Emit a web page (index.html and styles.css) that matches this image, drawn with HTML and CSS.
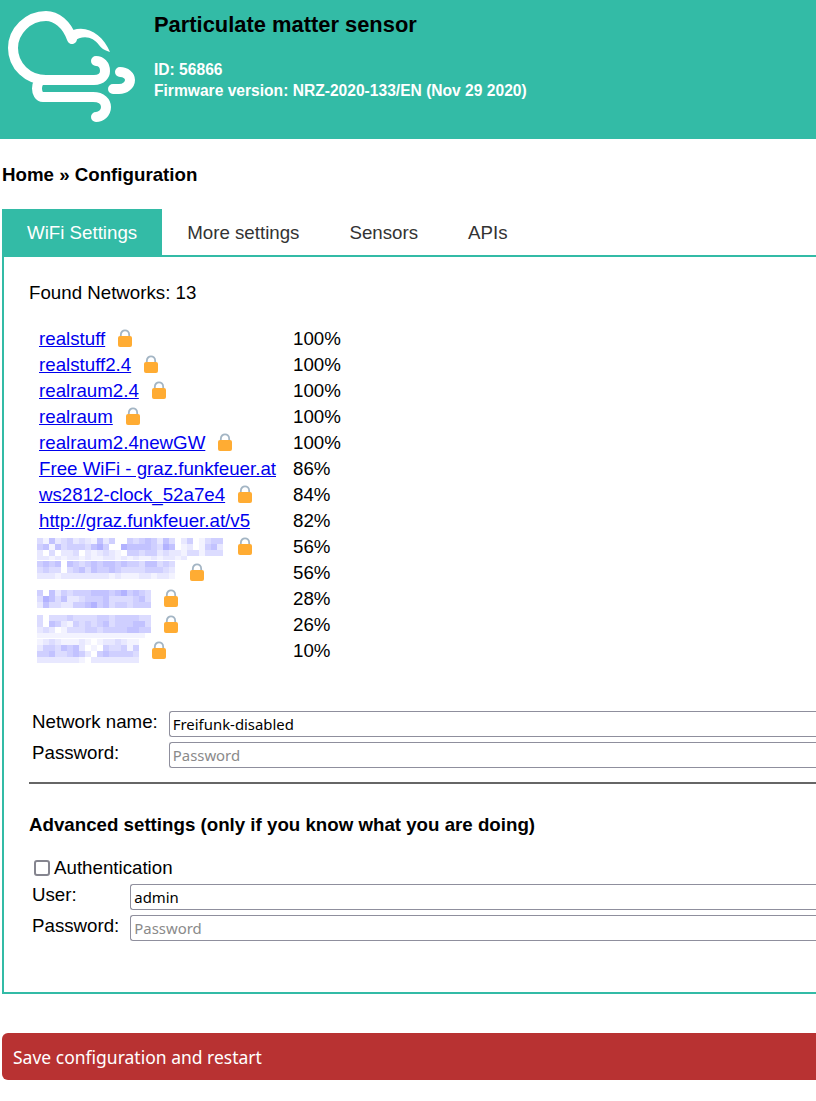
FILE: index.html
```html
<!DOCTYPE html>
<html>

<head>
    <title>Particulate matter sensor</title>
    <link rel="stylesheet" href="styles.css">
</head>

<body>
    <header class="topbar">
        <svg class="logo" width="140" height="130" viewBox="0 0 140 130" fill="none" stroke="#fff" stroke-width="10" stroke-linecap="round" stroke-linejoin="round">
            <path d="M72 39 C67 24 56 16 46 16 C28 16 13 31 13 48 C13 66 28 80 46 80 H94 C102 80 105 75 105 71 C105 65 101 61 96 61"/>
            <path d="M60 80 H43 C35 80 35 97 43 97 H93 C102 97 106 102 106 107 C106 113 101 117 96 117"/>
            <path d="M120 72 C126 72 130 76 130 80 C130 85 125 89 119 89 H113"/>
            <path d="M73 30 C88 25 103 35 110 52 C104 50 101 48 99 45 C93 37 83 34 73 42 Z" fill="#fff" stroke="none"/>
        </svg>
        <div class="topbar-text">
            <h1>Particulate matter sensor</h1>
            <div class="device-info">ID: 56866<br>Firmware version: NRZ-2020-133/EN (Nov 29 2020)</div>
        </div>
    </header>

    <main>
        <div class="crumbs">Home » Configuration</div>

        <div class="tabs">
            <a class="tab active">WiFi Settings</a>
            <a class="tab">More settings</a>
            <a class="tab">Sensors</a>
            <a class="tab">APIs</a>
        </div>

        <div class="panel">
            <div class="found">Found Networks: 13</div>

            <table class="networks">
                <tr><td><a href="#">realstuff</a><svg class="lock"><use href="#lockIcon"/></svg></td><td>100%</td></tr>
                <tr><td><a href="#">realstuff2.4</a><svg class="lock"><use href="#lockIcon"/></svg></td><td>100%</td></tr>
                <tr><td><a href="#">realraum2.4</a><svg class="lock"><use href="#lockIcon"/></svg></td><td>100%</td></tr>
                <tr><td><a href="#">realraum</a><svg class="lock"><use href="#lockIcon"/></svg></td><td>100%</td></tr>
                <tr><td><a href="#">realraum2.4newGW</a><svg class="lock"><use href="#lockIcon"/></svg></td><td>100%</td></tr>
                <tr><td><a href="#">Free WiFi - graz.funkfeuer.at</a></td><td>86%</td></tr>
                <tr><td><a href="#">ws2812-clock_52a7e4</a><svg class="lock"><use href="#lockIcon"/></svg></td><td>84%</td></tr>
                <tr><td><a href="#">http://graz.funkfeuer.at/v5</a></td><td>82%</td></tr>
                <tr><td><svg class="mosaic" data-top="4" data-rows="3152342321524004345425302401344|4515344435640065555436501201452|2030223021232104434423221331333|2212122121122121211212212000000"></svg><svg class="lock far"><use href="#lockIcon"/></svg></td><td>56%</td></tr>
                <tr><td><svg class="mosaic" data-top="1" data-rows="45450543454554544355343|34330345354454333344432|22212222222212111221221"></svg><svg class="lock far"><use href="#lockIcon"/></svg></td><td>56%</td></tr>
                <tr><td><svg class="mosaic" data-top="4" data-rows="4052434445554564543|3653522344453333453|2533224456453443444"></svg><svg class="lock"><use href="#lockIcon"/></svg></td><td>28%</td></tr>
                <tr><td><svg class="mosaic" data-top="3" data-rows="3033343333443444433|3054214343453444553|2320133344344445544|1111111111111111110"></svg><svg class="lock"><use href="#lockIcon"/></svg></td><td>26%</td></tr>
                <tr><td><svg class="mosaic" data-top="1" data-rows="12321112101223211|24435452010433414|44533454204544443|22222221022222222"></svg><svg class="lock"><use href="#lockIcon"/></svg></td><td>10%</td></tr>
            </table>

            <div class="field-grid wide">
                <label>Network name:</label>
                <input type="text" value="Freifunk-disabled">
                <label>Password:</label>
                <input type="password" placeholder="Password">
            </div>

            <hr>

            <h2>Advanced settings (only if you know what you are doing)</h2>

            <label class="check-line"><input type="checkbox">Authentication</label>
            <div class="field-grid">
                <label>User:</label>
                <input type="text" value="admin">
                <label>Password:</label>
                <input type="password" placeholder="Password">
            </div>
        </div>

        <button class="save">Save configuration and restart</button>
    </main>

    <svg width="0" height="0" class="defs">
        <symbol id="lockIcon" viewBox="0 0 16 18">
            <path d="M3.8 9 V6 C3.8 -0.2 12.2 -0.2 12.2 6 V9" fill="none" stroke="#a3b5c4" stroke-width="1.8"/>
            <rect x="1" y="7" width="14" height="11" rx="2" fill="#ffac33"/>
        </symbol>
    </svg>

    <script src="mosaic.js"></script>
</body>

</html>
```

FILE: styles.css
```css
body {
    font-family: "Liberation Sans", Arial, sans-serif;
    font-size: 18.72px;
    background-color: #fff;
    color: #000;
    margin: 0;
    padding: 0;
}

.topbar {
    display: flex;
    height: 139px;
    background-color: #33bba6;
}

.logo {
    flex: none;
    margin-right: 14px;
}

.topbar-text {
    padding-top: 12px;
}

.topbar-text h1 {
    font-size: 21.9px;
    line-height: 26px;
    margin: 0 0 21px 0;
}

.device-info {
    color: #fff;
    font-size: 15.6px;
    font-weight: bold;
    line-height: 21px;
}

main {
    padding-left: 2px;
}

.crumbs {
    font-weight: bold;
    line-height: 22px;
    margin: 25px 0 23px 0;
}

.tabs {
    display: flex;
}

.tab {
    color: #333;
    line-height: 45px;
    padding: 1px 25px 0 25px;
}

.tab.active {
    background-color: #33bba6;
    color: #fff;
}

.panel {
    border: 2px solid #33bba6;
    border-right: none;
    padding: 25px 0 51px 25px;
}

.found {
    line-height: 22px;
}

.networks {
    border-collapse: collapse;
    margin: 22px 0 47px 8px;
}

.networks td {
    height: 26px;
    padding: 0 15px 0 2px;
    line-height: 26px;
    vertical-align: top;
    white-space: nowrap;
}

.networks a {
    color: #00e;
}

.lock {
    width: 16px;
    height: 18px;
    margin-left: 12px;
    vertical-align: -2px;
}

.lock.far {
    margin-left: 14px;
}

.mosaic {
    margin-left: -2px;
    vertical-align: top;
}

.defs {
    position: absolute;
}

.field-grid {
    display: grid;
    grid-template-columns: auto 1fr;
    column-gap: 11px;
    row-gap: 5px;
    margin-left: 3px;
}

.field-grid label {
    line-height: 21px;
}

.field-grid input {
    font-family: "Noto Sans", sans-serif;
    font-size: 14.9px;
    height: 26px;
    box-sizing: border-box;
    padding: 0 3px;
    border: 1px solid #8f8f9d;
    border-right: none;
    border-radius: 3px 0 0 3px;
    color: #000;
}

.field-grid input::placeholder {
    color: #8a8a8a;
}

hr {
    border: none;
    border-top: 2px solid #666;
    margin: 14px 0 0 0;
}

h2 {
    font-size: 18.72px;
    line-height: 22px;
    margin: 30px 0 21px 0;
}

.check-line {
    display: flex;
    align-items: center;
    line-height: 22px;
    margin-left: 5px;
    margin-bottom: 5px;
}

.check-line input {
    width: 16px;
    height: 16px;
    margin: 0 4px 0 0;
    appearance: none;
    border: 2px solid #85858f;
    border-radius: 3px;
}

.save {
    display: block;
    width: 100%;
    height: 47px;
    margin-top: 39px;
    padding: 0 11px;
    border: none;
    border-radius: 6px 0 0 6px;
    background-color: #b83232;
    color: #fff;
    font-family: "Noto Sans", sans-serif;
    font-size: 17.5px;
    text-align: left;
}
```

FILE: mosaic.js
```js
// blurred network names, one digit per 6px block
const shades = ["#ffffff", "#f3f3ff", "#e8e8ff", "#dcdcff", "#cfcfff", "#c2c2ff", "#b2b2ff"];

for (let svg of document.querySelectorAll(".mosaic")) {
    let rows = svg.dataset.rows.split("|");
    let top = Number(svg.dataset.top);
    svg.setAttribute("width", rows[0].length * 6);
    svg.setAttribute("height", 26);
    rows.forEach((row, y) => {
        [...row].forEach((digit, x) => {
            let rect = document.createElementNS("http://www.w3.org/2000/svg", "rect");
            rect.setAttribute("x", x * 6);
            rect.setAttribute("y", top + y * 6);
            rect.setAttribute("width", 6);
            rect.setAttribute("height", 6);
            rect.setAttribute("fill", shades[digit]);
            svg.append(rect);
        });
    });
}
```
